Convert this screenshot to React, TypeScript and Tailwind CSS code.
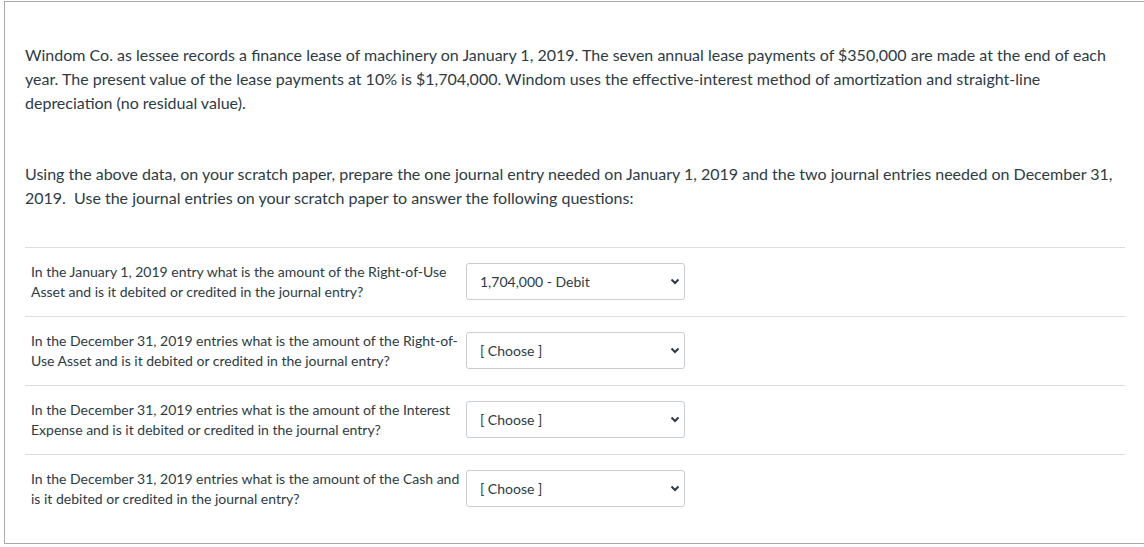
import React from 'react';

const QUESTIONS = [
  { text: 'In the January 1, 2019 entry what is the amount of the Right-of-Use Asset and is it debited or credited in the journal entry?', answer: '1,704,000 - Debit' },
  { text: 'In the December 31, 2019 entries what is the amount of the Right-of-Use Asset and is it debited or credited in the journal entry?', answer: '' },
  { text: 'In the December 31, 2019 entries what is the amount of the Interest Expense and is it debited or credited in the journal entry?', answer: '' },
  { text: 'In the December 31, 2019 entries what is the amount of the Cash and is it debited or credited in the journal entry?', answer: '' },
];

function Chevron() {
  return (
    <svg width="10" height="7" viewBox="0 0 10 7" className="shrink-0">
      <path d="M1.5 1.5 L5 5 L8.5 1.5" fill="none" stroke="#2d3b45" strokeWidth="2" />
    </svg>
  );
}

export default function App() {
  return (
    <div className="w-[1144px] h-[547px] overflow-hidden bg-white font-['Lato','Liberation_Sans',sans-serif] text-[#2d3b45]">
      <div className="ml-[4px] mt-[1px] w-[1142px] h-[543px] border border-[#aaaaaa] px-5 pt-[41px]">
        <p className="text-[16px] leading-[24px]">
          Windom Co. as lessee records a finance lease of machinery on January 1, 2019. The seven annual lease payments of $350,000 are made at the end of each year. The present value of the lease payments at 10% is $1,704,000. Windom uses the effective-interest method of amortization and straight-line depreciation (no residual value).
        </p>
        <p className="text-[16px] leading-[24px] mt-[47px]">
          Using the above data, on your scratch paper, prepare the one journal entry needed on January 1, 2019 and the two journal entries needed on December 31, 2019.&nbsp; Use the journal entries on your scratch paper to answer the following questions:
        </p>
        <div className="mt-[37px] border-t border-[#dddddd]">
          {QUESTIONS.map((q, i) => (
            <div key={i} className={`flex items-start h-[69px] pl-[6px] pt-[14px] ${i < QUESTIONS.length - 1 ? 'border-b border-[#dddddd]' : ''}`}>
              <div className="w-[429px] text-[14px] leading-[20px]">{q.text}</div>
              <div className="ml-[6px] mt-[1px] w-[219px] h-[37px] border border-[#c7cdd1] rounded-[3px] flex items-center justify-between pl-[13px] pr-[4px]">
                <span className="text-[14px]">{q.answer || '[ Choose ]'}</span>
                <Chevron />
              </div>
            </div>
          ))}
        </div>
      </div>
    </div>
  );
}
